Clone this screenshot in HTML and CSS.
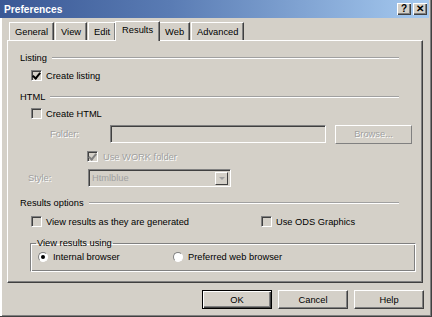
FILE: index.html
```html
<!DOCTYPE html>
<html lang="en">
<head>
    <meta charset="UTF-8">
    <title>Preferences</title>
    <link rel="stylesheet" href="styles.css">
</head>
<body>
    <div class="window">
        <div class="titlebar">
            <span class="title">Preferences</span>
            <div class="caption-buttons">
                <span class="cap-btn">?</span>
                <span class="cap-btn">&#x2715;</span>
            </div>
        </div>

        <div class="tabs">
            <span class="tab">General</span>
            <span class="tab">View</span>
            <span class="tab">Edit</span>
            <span class="tab active">Results</span>
            <span class="tab">Web</span>
            <span class="tab">Advanced</span>
        </div>

        <div class="panel">
            <div class="section-head"><span>Listing</span><i class="rule"></i></div>
            <div class="row indent first-row"><span class="check checked"></span>Create listing</div>

            <div class="section-head html-head"><span>HTML</span><i class="rule"></i></div>
            <div class="row indent"><span class="check"></span>Create HTML</div>

            <div class="folder-row">
                <span class="label disabled folder-label">Folder:</span>
                <span class="textbox"></span>
                <span class="btn browse disabled">Browse...</span>
            </div>
            <div class="row work-row disabled"><span class="check checked dim"></span>Use WORK folder</div>
            <div class="style-row">
                <span class="label disabled style-label">Style:</span>
                <span class="combo"><span class="combo-text">Htmlblue</span><span class="combo-arrow"></span></span>
            </div>

            <div class="section-head results-head"><span>Results options</span><i class="rule"></i></div>
            <div class="row indent options-row">
                <span class="opt view-opt"><span class="check"></span>View results as they are generated</span>
                <span class="opt"><span class="check"></span>Use ODS Graphics</span>
            </div>

            <fieldset class="group">
                <legend>View results using</legend>
                <span class="opt internal"><span class="radio on"></span>Internal browser</span>
                <span class="opt"><span class="radio"></span>Preferred web browser</span>
            </fieldset>
        </div>

        <div class="buttons">
            <span class="btn default">OK</span>
            <span class="btn">Cancel</span>
            <span class="btn">Help</span>
        </div>
    </div>
</body>
</html>
```

FILE: styles.css
```css
body {
    margin: 0;
    font-family: "Liberation Sans", Arial, sans-serif;
    font-size: 9.3px;
    color: #000;
}

.window {
    width: 432px;
    height: 317px;
    box-sizing: border-box;
    background-color: #d4d0c8;
    border-right: 1px solid #404040;
    border-bottom: 1px solid #404040;
    box-shadow: inset 2px 0 0 #fff, inset -1px -1px 0 #808080;
    padding: 0 2px 0 0;
}

.titlebar {
    height: 18px;
    display: flex;
    align-items: center;
    justify-content: space-between;
    background: linear-gradient(to right, #3a5895 0%, #5a7cb4 40%, #a6caf0 100%);
    padding: 0 2px 0 4px;
}

.title {
    color: #fff;
    font-weight: bold;
    font-size: 10.2px;
}

.caption-buttons {
    display: flex;
    gap: 2px;
}

.cap-btn {
    width: 14px;
    height: 12px;
    background-color: #d4d0c8;
    box-shadow: inset 1px 1px 0 #fff, inset -1px -1px 0 #404040, inset -2px -2px 0 #808080;
    font-weight: bold;
    font-size: 10px;
    line-height: 12px;
    text-align: center;
}

.tabs {
    display: flex;
    align-items: flex-end;
    height: 22px;
    padding-left: 9px;
}

.tab {
    height: 17px;
    line-height: 18px;
    padding: 0 5px;
    border-left: 1px solid #fff;
    border-top: 1px solid #fff;
    border-right: 1px solid #404040;
    box-shadow: inset -1px 0 0 #808080;
    margin-right: 1px;
    position: relative;
}

.tab.active {
    height: 19px;
    line-height: 16px;
    padding: 0 6px;
    margin: 0 -1px 0 -2px;
    background-color: #d4d0c8;
    z-index: 1;
    top: 1px;
}

.panel {
    height: 243px;
    margin-left: 7px;
    margin-right: 6px;
    box-sizing: border-box;
    border: 1px solid #fff;
    border-right-color: #404040;
    border-bottom-color: #404040;
    box-shadow: inset -1px -1px 0 #808080;
    padding: 10px 0 0 12px;
}

.section-head {
    display: flex;
    align-items: center;
    height: 13px;
}

.section-head .rule {
    flex: 1;
    height: 0;
    border-top: 1px solid #a0a0a0;
    border-bottom: 1px solid #fff;
    margin: 0 23px 0 5px;
}

.html-head {
    margin-top: 8px;
}

.results-head {
    margin-top: 9px;
}

.row {
    display: flex;
    align-items: center;
    height: 13px;
    margin-top: 4px;
}

.first-row {
    margin-top: 5px;
}

.indent {
    padding-left: 11px;
}

.check {
    width: 11px;
    height: 11px;
    box-sizing: border-box;
    border: 1px solid #808080;
    border-right-color: #fff;
    border-bottom-color: #fff;
    box-shadow: inset 1px 1px 0 #404040, inset -1px -1px 0 #d4d0c8;
    background-color: #d4d0c8;
    margin-right: 4px;
    flex-shrink: 0;
    position: relative;
}

.check.checked::after {
    content: "";
    position: absolute;
    left: 2px;
    top: 0;
    width: 3px;
    height: 6px;
    border-right: 2px solid #000;
    border-bottom: 2px solid #000;
    transform: rotate(40deg);
}

.check.dim::after {
    border-color: #808080;
}

.disabled {
    color: #a0a0a0;
    text-shadow: 1px 1px 0 #fff;
}

.folder-row {
    display: flex;
    align-items: center;
    margin-top: 5px;
    height: 18px;
}

.folder-label {
    width: 60px;
    padding-left: 30px;
}

.textbox {
    width: 216px;
    height: 18px;
    box-sizing: border-box;
    border: 1px solid #808080;
    border-right-color: #fff;
    border-bottom-color: #fff;
    box-shadow: inset 1px 1px 0 #404040;
    background-color: #d4d0c8;
}

.btn {
    display: flex;
    align-items: center;
    justify-content: center;
    box-sizing: border-box;
    height: 19px;
    width: 70px;
    border: 1px solid #fff;
    border-right-color: #404040;
    border-bottom-color: #404040;
    box-shadow: inset -1px -1px 0 #808080;
    background-color: #d4d0c8;
}

.browse {
    width: 77px;
    margin-left: 9px;
    border-color: #fff #808080 #808080 #fff;
    box-shadow: none;
}

.work-row {
    margin-top: 7px;
    padding-left: 67px;
}

.work-row .check {
    margin-right: 5px;
}

.style-row {
    display: flex;
    align-items: center;
    height: 18px;
    margin-top: 6px;
}

.style-label {
    width: 60px;
    padding-left: 8px;
}

.combo {
    display: flex;
    width: 143px;
    height: 18px;
    box-sizing: border-box;
    border: 1px solid #808080;
    border-right-color: #fff;
    border-bottom-color: #fff;
    box-shadow: inset 1px 1px 0 #404040;
    padding: 2px 2px 2px 3px;
    background-color: #d4d0c8;
}

.combo-text {
    flex: 1;
    color: #a0a0a0;
    line-height: 13px;
}

.combo-arrow {
    width: 13px;
    height: 13px;
    box-sizing: border-box;
    border: 1px solid #fff;
    border-right-color: #404040;
    border-bottom-color: #404040;
    position: relative;
}

.combo-arrow::after {
    content: "";
    position: absolute;
    left: 3px;
    top: 4px;
    border-left: 3px solid transparent;
    border-right: 3px solid transparent;
    border-top: 3px solid #a0a0a0;
}

.options-row {
    margin-top: 6px;
}

.opt {
    display: flex;
    align-items: center;
}

.view-opt {
    width: 230px;
}

.group {
    margin: 10px 6px 0 10px;
    height: 34px;
    box-sizing: border-box;
    border: 1px solid #808080;
    border-right-color: #fff;
    border-bottom-color: #fff;
    box-shadow: inset 1px 1px 0 #fff, inset -1px -1px 0 #808080;
    padding: 0 0 6px 7px;
    display: flex;
    align-items: center;
}

.group legend {
    padding: 0 1px;
    margin-left: -2px;
    line-height: 11px;
}

.internal {
    width: 135px;
}

.radio {
    width: 10px;
    height: 10px;
    box-sizing: border-box;
    border-radius: 50%;
    border: 1px solid #808080;
    border-right-color: #fff;
    border-bottom-color: #fff;
    background-color: #fff;
    margin-right: 5px;
    position: relative;
}

.radio.on::after {
    content: "";
    position: absolute;
    left: 2px;
    top: 2px;
    width: 4px;
    height: 4px;
    border-radius: 50%;
    background-color: #000;
}

.buttons {
    display: flex;
    justify-content: flex-end;
    gap: 6px;
    margin-top: 7px;
    padding-right: 5px;
}

.btn.default {
    border: 1px solid #000;
    box-shadow: inset 1px 1px 0 #fff, inset -1px -1px 0 #404040, inset -2px -2px 0 #808080;
}
```
